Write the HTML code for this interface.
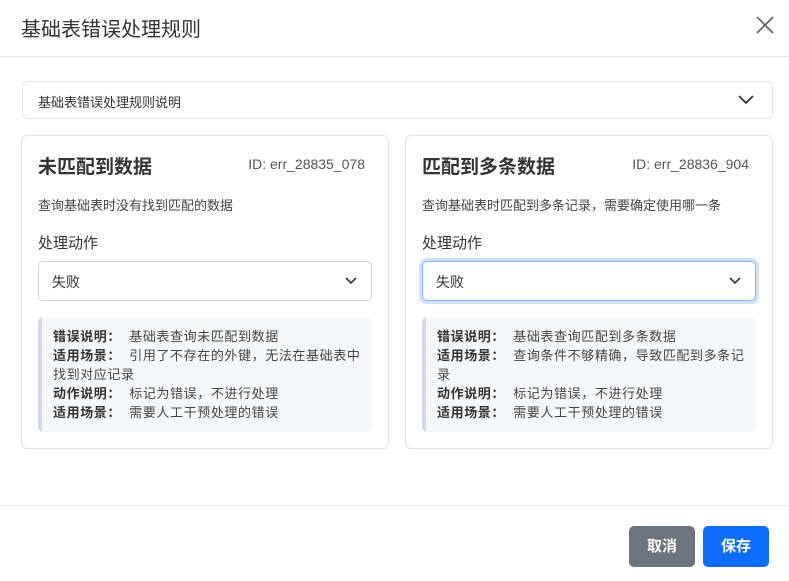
<!DOCTYPE html><html><head><meta charset="utf-8"><style>
*{box-sizing:border-box;margin:0;padding:0}
body{width:789px;height:581px;background:#fff;font-family:"Liberation Sans","Noto Sans CJK SC",sans-serif;color:#212529;position:relative;overflow:hidden}
.a{position:absolute}
.card{position:absolute;top:135px;width:368px;height:314px;border:1px solid #dee2e6;border-radius:6px}
.t{position:absolute;left:16px;top:16px;font-size:19px;font-weight:bold;color:#333}
.id{position:absolute;right:23px;top:20px;font-size:14px;color:#555}
.d{position:absolute;left:16px;top:59px;font-size:13px;color:#444}
.l{position:absolute;left:16px;top:96px;font-size:15px;color:#333}
.s{position:absolute;left:16px;top:125px;width:334px;height:40px;border:1px solid #ced4da;border-radius:5px;font-size:14px;padding:10px 13px;color:#333}
.s svg{position:absolute;right:14px;top:15px}
.i{position:absolute;left:16px;top:181px;width:334px;height:115px;background:#f6f7f9;border-left:4px solid #d3d7de;border-radius:5px;padding:10px 10px 0 11px;font-size:13px;line-height:19px;color:#444;letter-spacing:0.6px}
.i b{color:#333;margin-right:4px}
.btn{position:absolute;top:526px;width:66px;height:41px;border-radius:5px;color:#fff;font-size:15px;font-weight:bold;text-align:center;line-height:41px}
</style></head><body>
<div class="a" style="left:21px;top:13px;font-size:20px;color:#333">基础表错误处理规则</div>
<svg class="a" style="left:756px;top:16px" width="18" height="18"><path d="M1 1L17 17M17 1L1 17" stroke="#666" stroke-width="1.8"/></svg>
<div class="a" style="left:0;top:56px;width:789px;border-top:1px solid #e5e7ea"></div>
<div class="a" style="left:22px;top:81px;width:751px;height:38px;border:1px solid #dee2e6;border-radius:5px;font-size:13px;padding:10px 15px;color:#333">基础表错误处理规则说明
<svg class="a" style="right:18px;top:13px" width="16" height="10"><path d="M1 1L8 8L15 1" stroke="#333" stroke-width="1.8" fill="none"/></svg></div>
<div class="card" style="left:21px">
<div class="t">未匹配到数据</div><div class="id">ID: err_28835_078</div>
<div class="d">查询基础表时没有找到匹配的数据</div><div class="l">处理动作</div>
<div class="s">失败<svg width="12" height="8"><path d="M1 1L6 6L11 1" stroke="#333" stroke-width="1.6" fill="none"/></svg></div>
<div class="i"><b>错误说明：</b> 基础表查询未匹配到数据<br><b>适用场景：</b> 引用了不存在的外键，无法在基础表中<br>找到对应记录<br><b>动作说明：</b> 标记为错误，不进行处理<br><b>适用场景：</b> 需要人工干预处理的错误</div>
</div>
<div class="card" style="left:405px">
<div class="t">匹配到多条数据</div><div class="id">ID: err_28836_904</div>
<div class="d">查询基础表时匹配到多条记录，需要确定使用哪一条</div><div class="l">处理动作</div>
<div class="s" style="border-color:#86b7fe;box-shadow:0 0 0 3px rgba(13,110,253,.2)">失败<svg width="12" height="8"><path d="M1 1L6 6L11 1" stroke="#333" stroke-width="1.6" fill="none"/></svg></div>
<div class="i"><b>错误说明：</b> 基础表查询匹配到多条数据<br><b>适用场景：</b> 查询条件不够精确，导致匹配到多条记<br>录<br><b>动作说明：</b> 标记为错误，不进行处理<br><b>适用场景：</b> 需要人工干预处理的错误</div>
</div>
<div class="a" style="left:0;top:505px;width:789px;border-top:1px solid #e5e7ea"></div>
<div class="btn" style="left:629px;background:#6c757d">取消</div>
<div class="btn" style="left:703px;background:#0d6efd">保存</div>
</body></html>
